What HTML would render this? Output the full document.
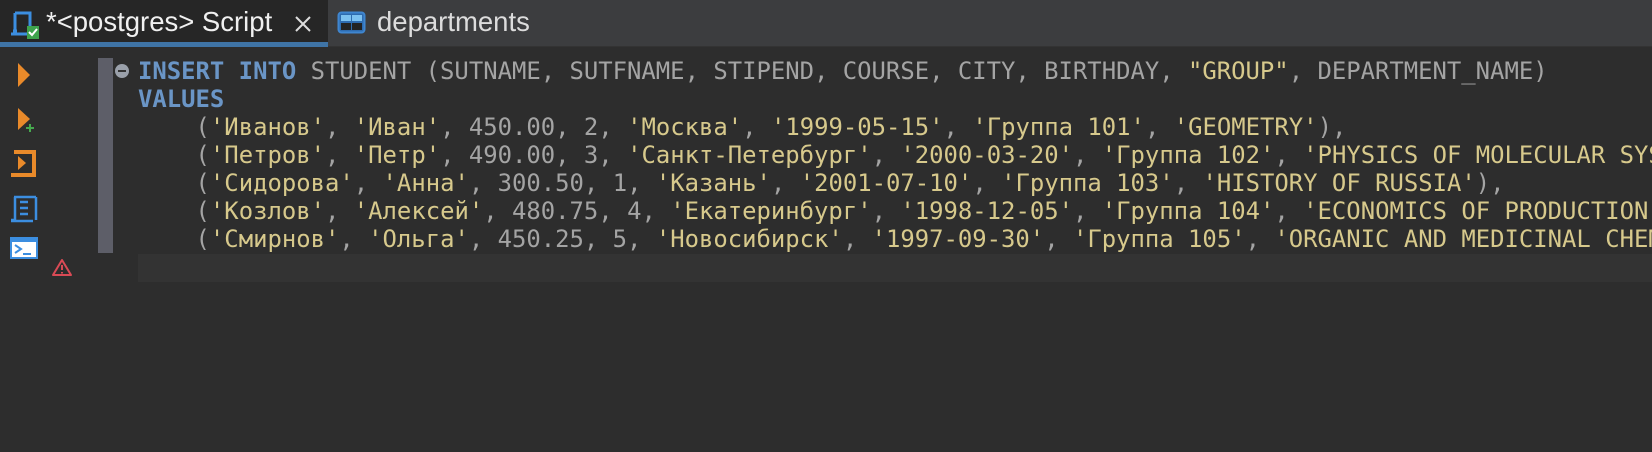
<!DOCTYPE html>
<html><head><meta charset="utf-8"><style>
*{margin:0;padding:0;box-sizing:border-box}
html,body{width:1652px;height:452px;overflow:hidden}
body{background:#2d2d2d;position:relative;font-family:"Liberation Sans",sans-serif}
.tabbar{position:absolute;left:0;top:0;width:1652px;height:47px;background:#3c3d3f;border-bottom:1px solid #333}
.tab1{position:absolute;left:0;top:0;width:328px;height:47px;background:#262626;border-bottom:5px solid #3f74a6}
.t1{position:absolute;left:46px;top:6px;font-size:27.5px;color:#f0f0f0;white-space:nowrap}
.t2{position:absolute;left:377px;top:6px;font-size:27.5px;color:#dcdcdc}
.gbar{position:absolute;left:98px;top:58px;width:15px;height:195px;background:#5d5e68}
.cur{position:absolute;left:138px;top:254px;width:1514px;height:28px;background:#333333}
.ed{position:absolute;left:138px;top:57px;width:1514px;height:230px;overflow:hidden}
pre{font-family:"DejaVu Sans Mono","Liberation Mono",monospace;font-size:23.9px;line-height:28px;color:#a4a4a4}
.k{color:#6a95c6;font-weight:bold}
.s{color:#d7c98c}
</style></head><body>
<div class="tabbar">
 <div class="tab1">
  <svg style="position:absolute;left:8px;top:10px" width="32" height="30" viewBox="0 0 32 30">
   <path d="M7 3h15v18M7 3v18M5 21h4M3 24h16" stroke="#3c8ee0" stroke-width="3" fill="none"/>
   <rect x="19" y="16" width="12" height="13" fill="#3fa34d"/>
   <path d="M21 22l3 3 5-6" stroke="#fff" stroke-width="2" fill="none"/>
  </svg>
  <div class="t1">*&lt;postgres&gt; Script</div>
  <svg style="position:absolute;left:293px;top:14px" width="20" height="20"><path d="M3 3l14 14M17 3L3 17" stroke="#ddd" stroke-width="2"/></svg>
 </div>
 <svg style="position:absolute;left:337px;top:11px" width="30" height="24" viewBox="0 0 30 24">
  <rect x="1.5" y="1.5" width="26" height="20" rx="3" fill="#2e6cb0" stroke="#3f86d0" stroke-width="2"/>
  <rect x="4" y="4" width="10" height="6" fill="#7cc1f0"/><rect x="15" y="4" width="10" height="6" fill="#7cc1f0"/>
  <rect x="4" y="12" width="10" height="7" fill="#222"/><rect x="15" y="12" width="10" height="7" fill="#222"/>
 </svg>
 <div class="t2">departments</div>
</div>
<svg style="position:absolute;left:0;top:0" width="80" height="290" viewBox="0 0 80 290">
 <path d="M18 63l12 12-12 12z" fill="#e98a2a"/>
 <path d="M18 108l12 11-12 11z" fill="#e98a2a"/>
 <path d="M30 124v8M26 128h8" stroke="#46a84e" stroke-width="2"/>
 <path d="M14 152h20v23H11" stroke="#e98a2a" stroke-width="4" fill="none"/><path d="M18 156l8 7-8 7z" fill="#e98a2a"/>
 <path d="M14 197h22M15 197v23h-4M20 202h8M20 208h8M20 214h8M36 197v23M11 221h22" stroke="#3c8ee0" stroke-width="2.5" fill="none"/>
 <rect x="10" y="237" width="28" height="22" fill="#3c8ee0"/><rect x="12" y="242" width="24" height="15" fill="#fff"/>
 <path d="M15 245l6 4-6 4" stroke="#3c8ee0" stroke-width="2" fill="none"/><path d="M23 254h8" stroke="#3c8ee0" stroke-width="2"/>
 <path d="M62 260l9 15H53z" stroke="#d94a55" stroke-width="2" fill="none" stroke-linejoin="round"/><path d="M62 265v5M62 272v1.5" stroke="#d94a55" stroke-width="2"/>
</svg>
<div class="gbar"></div>
<svg style="position:absolute;left:114px;top:63px" width="18" height="18"><circle cx="8" cy="8" r="7" fill="#9aa0aa"/><rect x="4" y="7" width="8" height="2" fill="#333"/></svg>
<div class="cur"></div>
<div class="ed"><pre><span class="k">INSERT INTO</span> STUDENT (SUTNAME, SUTFNAME, STIPEND, COURSE, CITY, BIRTHDAY, <span class="s">"GROUP"</span>, DEPARTMENT_NAME)
<span class="k">VALUES</span>
    (<span class="s">'Иванов'</span>, <span class="s">'Иван'</span>, 450.00, 2, <span class="s">'Москва'</span>, <span class="s">'1999-05-15'</span>, <span class="s">'Группа 101'</span>, <span class="s">'GEOMETRY'</span>),
    (<span class="s">'Петров'</span>, <span class="s">'Петр'</span>, 490.00, 3, <span class="s">'Санкт-Петербург'</span>, <span class="s">'2000-03-20'</span>, <span class="s">'Группа 102'</span>, <span class="s">'PHYSICS OF MOLECULAR SYSTEMS'</span>),
    (<span class="s">'Сидорова'</span>, <span class="s">'Анна'</span>, 300.50, 1, <span class="s">'Казань'</span>, <span class="s">'2001-07-10'</span>, <span class="s">'Группа 103'</span>, <span class="s">'HISTORY OF RUSSIA'</span>),
    (<span class="s">'Козлов'</span>, <span class="s">'Алексей'</span>, 480.75, 4, <span class="s">'Екатеринбург'</span>, <span class="s">'1998-12-05'</span>, <span class="s">'Группа 104'</span>, <span class="s">'ECONOMICS OF PRODUCTION'</span>),
    (<span class="s">'Смирнов'</span>, <span class="s">'Ольга'</span>, 450.25, 5, <span class="s">'Новосибирск'</span>, <span class="s">'1997-09-30'</span>, <span class="s">'Группа 105'</span>, <span class="s">'ORGANIC AND MEDICINAL CHEMISTRY'</span>);
</pre></div>
</body></html>
